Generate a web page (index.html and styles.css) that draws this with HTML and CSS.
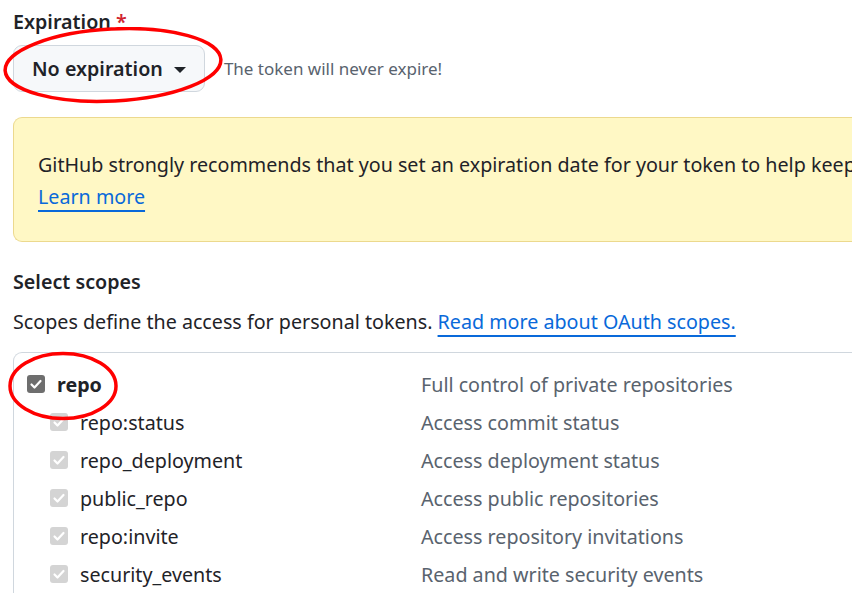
FILE: index.html
```html
<!DOCTYPE html>
<html>
<head>
<meta charset="utf-8">
<link rel="stylesheet" href="styles.css">
</head>
<body>
<div class="page">
  <div class="label">Expiration <span class="req">*</span></div>
  <div class="exp-row">
    <button class="btn">No expiration <span class="caret"></span></button>
    <span class="note">The token will never expire!</span>
  </div>
  <div class="flash">
    <p class="flash-text">GitHub strongly recommends that you set an expiration date for your token to help keep your information secure.</p>
    <a class="link" href="#">Learn more</a>
  </div>
  <h3 class="title">Select scopes</h3>
  <p class="desc">Scopes define the access for personal tokens. <a class="link" href="#">Read more about OAuth scopes.</a></p>
  <div class="scopes">
    <div class="row parent">
      <span class="name"><span class="cb dark"><svg viewBox="0 0 16 16"><path d="M3.5 8.5l3 3 6-6.5" fill="none" stroke="#fff" stroke-width="2.2" stroke-linecap="round" stroke-linejoin="round"/></svg></span><b>repo</b></span>
      <span class="info">Full control of private repositories</span>
    </div>
    <div class="row child">
      <span class="name"><span class="cb light"><svg viewBox="0 0 16 16"><path d="M3.5 8.5l3 3 6-6.5" fill="none" stroke="#fff" stroke-width="2.2" stroke-linecap="round" stroke-linejoin="round"/></svg></span>repo:status</span>
      <span class="info">Access commit status</span>
    </div>
    <div class="row child">
      <span class="name"><span class="cb light"><svg viewBox="0 0 16 16"><path d="M3.5 8.5l3 3 6-6.5" fill="none" stroke="#fff" stroke-width="2.2" stroke-linecap="round" stroke-linejoin="round"/></svg></span>repo_deployment</span>
      <span class="info">Access deployment status</span>
    </div>
    <div class="row child">
      <span class="name"><span class="cb light"><svg viewBox="0 0 16 16"><path d="M3.5 8.5l3 3 6-6.5" fill="none" stroke="#fff" stroke-width="2.2" stroke-linecap="round" stroke-linejoin="round"/></svg></span>public_repo</span>
      <span class="info">Access public repositories</span>
    </div>
    <div class="row child">
      <span class="name"><span class="cb light"><svg viewBox="0 0 16 16"><path d="M3.5 8.5l3 3 6-6.5" fill="none" stroke="#fff" stroke-width="2.2" stroke-linecap="round" stroke-linejoin="round"/></svg></span>repo:invite</span>
      <span class="info">Access repository invitations</span>
    </div>
    <div class="row child">
      <span class="name"><span class="cb light"><svg viewBox="0 0 16 16"><path d="M3.5 8.5l3 3 6-6.5" fill="none" stroke="#fff" stroke-width="2.2" stroke-linecap="round" stroke-linejoin="round"/></svg></span>security_events</span>
      <span class="info">Read and write security events</span>
    </div>
  </div>
</div>
<svg class="mark mark-btn" viewBox="0 0 230 80"><ellipse cx="113" cy="38" rx="108" ry="36" transform="rotate(-3 113 38)" fill="none" stroke="#f00" stroke-width="3.5"/></svg>
<svg class="mark mark-repo" viewBox="0 0 120 72"><ellipse cx="60" cy="36" rx="53" ry="32.5" fill="none" stroke="#f00" stroke-width="3.5"/></svg>
</body>
</html>
```
FILE: styles.css
```css
html, body { margin: 0; padding: 0; background: #fff; }
body {
  font-family: "Noto Sans", "Open Sans", sans-serif;
  color: #1f2328;
  font-size: 19.7px;
  overflow: hidden;
  width: 852px;
  height: 600px;
  position: relative;
}
.page { padding: 6px 0 0 13px; white-space: nowrap; }
.label { font-weight: 600; line-height: 32px; height: 32px; }
.req { color: #d1242f; }
.exp-row { display: flex; align-items: center; gap: 19px; margin-top: 7px; }
.btn {
  font: inherit; font-weight: 600; color: #1f2328;
  height: 47px; padding: 0 18px 0 18px;
  background: #f6f8fa; border: 1px solid #d0d7de; border-radius: 9px;
  display: flex; align-items: center; gap: 11px;
}
.caret { width: 0; height: 0; border-left: 6px solid transparent; border-right: 6px solid transparent; border-top: 6px solid #1f2328; margin-top: 2px; }
.note { color: #59636e; font-size: 17px; }
.flash {
  margin-top: 25px;
  background: #fff8c5; border: 1px solid #ecd98e; border-right: 0;
  border-radius: 9px 0 0 9px;
  height: 125px; box-sizing: border-box;
  padding: 31px 0 0 24px;
}
.flash-text { margin: 0; line-height: 32px; overflow: hidden; }
.link { color: #0969da; text-decoration: underline; text-underline-offset: 6px; text-decoration-thickness: 2px; }
.flash .link { line-height: 32px; }
.title { font-size: 19.7px; font-weight: 600; margin: 24px 0 0; line-height: 32px; }
.desc { margin: 8px 0 0; line-height: 32px; }
.scopes {
  margin-top: 14px;
  border-top: 1px solid #d0d7de; border-left: 1px solid #d0d7de;
  border-top-left-radius: 9px;
  padding: 12px 0 0 13px;
}
.row { display: grid; grid-template-columns: 394px auto; align-items: center; height: 38px; }
.child .name { padding-left: 23px; }
.name { display: flex; align-items: center; gap: 12px; }
.info { color: #59636e; }
.cb { width: 18px; height: 18px; border-radius: 3px; display: inline-flex; align-items: center; justify-content: center; }
.cb svg { width: 16px; height: 16px; }
.dark { background: #6e6e6e; }
.light { background: #d4d4d4; }
.mark { position: absolute; pointer-events: none; }
.mark-btn { left: 0; top: 27px; width: 230px; height: 80px; }
.mark-repo { left: 3px; top: 350px; width: 120px; height: 72px; }
```
